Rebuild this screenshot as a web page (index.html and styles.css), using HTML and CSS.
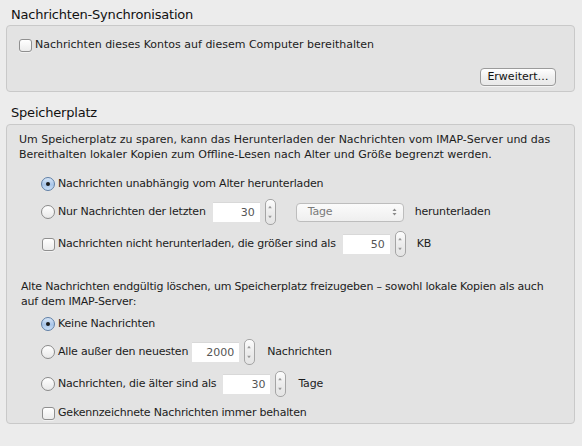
FILE: index.html
```html
<!DOCTYPE html>
<html lang="de">
<head>
    <meta charset="UTF-8">
    <title>Postfach-Verhalten</title>
    <link rel="stylesheet" href="styles.css">
</head>
<body>
    <div class="section-title">Nachrichten-Synchronisation</div>
    <div class="group group-sync">
        <div class="option option-sync">
            <span class="checkbox"></span>
            <span>Nachrichten dieses Kontos auf diesem Computer bereithalten</span>
        </div>
        <div class="button-row">
            <button class="button">Erweitert…</button>
        </div>
    </div>

    <div class="section-title section-title-storage">Speicherplatz</div>
    <div class="group group-storage">
        <p class="description description-download">Um Speicherplatz zu sparen, kann das Herunterladen der Nachrichten vom IMAP-Server und das<br>Bereithalten lokaler Kopien zum Offline-Lesen nach Alter und Größe begrenzt werden.</p>

        <div class="option option-first">
            <span class="radio selected"></span>
            <span>Nachrichten unabhängig vom Alter herunterladen</span>
        </div>
        <div class="option option-near">
            <span class="radio"></span>
            <span class="label">Nur Nachrichten der letzten</span>
            <span class="field">30</span>
            <span class="stepper"><svg width="11" height="26" viewBox="0 0 11 26"><path d="M3.5 9 L5.5 6 L7.5 9 Z" fill="#9a9a9a"/><path d="M3.5 17 L5.5 20 L7.5 17 Z" fill="#9a9a9a"/></svg></span>
            <span class="popup">Tage<svg class="popup-arrows" width="7" height="10" viewBox="0 0 7 10"><path d="M1.5 4 L3.5 1.5 L5.5 4 Z" fill="#8a8a8a"/><path d="M1.5 6 L3.5 8.5 L5.5 6 Z" fill="#8a8a8a"/></svg></span>
            <span class="unit unit-wide">herunterladen</span>
        </div>
        <div class="option option-far">
            <span class="checkbox"></span>
            <span class="label">Nachrichten nicht herunterladen, die größer sind als</span>
            <span class="field">50</span>
            <span class="stepper"><svg width="11" height="26" viewBox="0 0 11 26"><path d="M3.5 9 L5.5 6 L7.5 9 Z" fill="#9a9a9a"/><path d="M3.5 17 L5.5 20 L7.5 17 Z" fill="#9a9a9a"/></svg></span>
            <span class="unit unit-wide">KB</span>
        </div>

        <p class="description description-delete">Alte Nachrichten endgültig löschen, um Speicherplatz freizugeben – sowohl lokale Kopien als auch<br>auf dem IMAP-Server:</p>

        <div class="option option-close">
            <span class="radio selected"></span>
            <span>Keine Nachrichten</span>
        </div>
        <div class="option option-near">
            <span class="radio"></span>
            <span class="label label-tight">Alle außer den neuesten</span>
            <span class="field">2000</span>
            <span class="stepper"><svg width="11" height="26" viewBox="0 0 11 26"><path d="M3.5 9 L5.5 6 L7.5 9 Z" fill="#9a9a9a"/><path d="M3.5 17 L5.5 20 L7.5 17 Z" fill="#9a9a9a"/></svg></span>
            <span class="unit">Nachrichten</span>
        </div>
        <div class="option option-far">
            <span class="radio"></span>
            <span class="label">Nachrichten, die älter sind als</span>
            <span class="field">30</span>
            <span class="stepper"><svg width="11" height="26" viewBox="0 0 11 26"><path d="M3.5 9 L5.5 6 L7.5 9 Z" fill="#9a9a9a"/><path d="M3.5 17 L5.5 20 L7.5 17 Z" fill="#9a9a9a"/></svg></span>
            <span class="unit">Tage</span>
        </div>
        <div class="option option-last">
            <span class="checkbox"></span>
            <span>Gekennzeichnete Nachrichten immer behalten</span>
        </div>
    </div>
</body>
</html>
```

FILE: styles.css
```css
* {
    box-sizing: border-box;
    margin: 0;
    padding: 0;
}

body {
    font-family: "DejaVu Sans", "Liberation Sans", sans-serif;
    font-size: 11px;
    color: #1c1c1c;
    background-color: #ececec;
    width: 582px;
    height: 446px;
    overflow: hidden;
}

.section-title {
    font-size: 13px;
    line-height: 18px;
    letter-spacing: -0.2px;
    padding: 6px 0 1px 11px;
    color: #111;
}

.section-title-storage {
    padding-top: 12px;
    padding-bottom: 2px;
}

.group {
    margin: 0 7px 0 6px;
    background-color: #e3e3e3;
    border: 1px solid #c9c9c9;
    border-radius: 4px;
}

.group-sync {
    height: 67px;
    padding: 10px 18px 0 12px;
}

.group-storage {
    height: 300px;
    padding: 0 8px 0 12px;
}

.option {
    display: flex;
    align-items: center;
    height: 20px;
    line-height: 20px;
    white-space: nowrap;
}

.option-sync {
    height: 18px;
    line-height: 18px;
}

.group-storage .option {
    padding-left: 22px;
    letter-spacing: -0.2px;
}

.option-first { margin-top: 12px; }
.option-near { margin-top: 8px; }
.option-far { margin-top: 12px; }
.option-close { margin-top: 5px; }
.option-last { margin-top: 9px; }

.button-row {
    display: flex;
    justify-content: flex-end;
    margin-top: 14px;
}

.button {
    font-family: inherit;
    font-size: 11px;
    color: #111;
    width: 76px;
    height: 18px;
    line-height: 16px;
    border: 1px solid #9b9b9b;
    border-radius: 4px;
    background: linear-gradient(#ffffff, #f0f0f0 50%, #e9e9e9);
    box-shadow: 0 1px 0 rgba(255,255,255,0.6);
}

.description {
    line-height: 15px;
    white-space: nowrap;
    color: #1c1c1c;
}

.description-download {
    margin-top: 7px;
}

.description-delete {
    margin-top: 25px;
    padding-left: 2px;
    letter-spacing: -0.2px;
}

.checkbox {
    display: inline-block;
    width: 13px;
    height: 13px;
    margin-right: 3px;
    border: 1px solid #8f8f8f;
    border-radius: 3px;
    background: linear-gradient(#ffffff, #ececec);
    box-shadow: 0 1px 0 rgba(255,255,255,0.5);
    flex-shrink: 0;
}

.group-storage .checkbox {
    margin-left: 1px;
}

.radio {
    position: relative;
    display: inline-block;
    width: 14px;
    height: 14px;
    margin-right: 3px;
    border: 1px solid #8a8a8a;
    border-radius: 50%;
    background: linear-gradient(#ffffff, #e8e8e8);
    flex-shrink: 0;
}

.radio.selected {
    border-color: #5f7fa6;
    background: linear-gradient(#d6e5f6, #a9c6e9 55%, #c9def6);
}

.radio.selected::after {
    content: "";
    position: absolute;
    left: 4px;
    top: 4px;
    width: 4px;
    height: 4px;
    border-radius: 50%;
    background-color: #1b1b1b;
}

.label {
    margin-right: 7px;
}

.label-tight {
    margin-right: 4px;
}

.field {
    display: inline-block;
    width: 47px;
    height: 20px;
    line-height: 20px;
    padding-right: 5px;
    text-align: right;
    color: #555;
    background-color: #fff;
    border-top: 1px solid #d8d8d8;
    letter-spacing: 0;
}

.stepper {
    display: inline-flex;
    margin-left: 5px;
    width: 11px;
    height: 26px;
    border: 1px solid #a5a5a5;
    border-radius: 5px;
    background: linear-gradient(#fdfdfd, #ececec 50%, #e4e4e4);
    overflow: hidden;
}

.stepper svg {
    margin-left: -1px;
    margin-top: -1px;
}

.popup {
    display: inline-flex;
    align-items: center;
    justify-content: space-between;
    width: 108px;
    height: 19px;
    margin-left: 20px;
    padding: 0 5px 0 11px;
    color: #7a7a7a;
    border: 1px solid #bdbdbd;
    border-radius: 4px;
    background: linear-gradient(#fbfbfb, #efefef);
}

.unit {
    margin-left: 12px;
}

.unit-wide {
    margin-left: 11px;
}
```
